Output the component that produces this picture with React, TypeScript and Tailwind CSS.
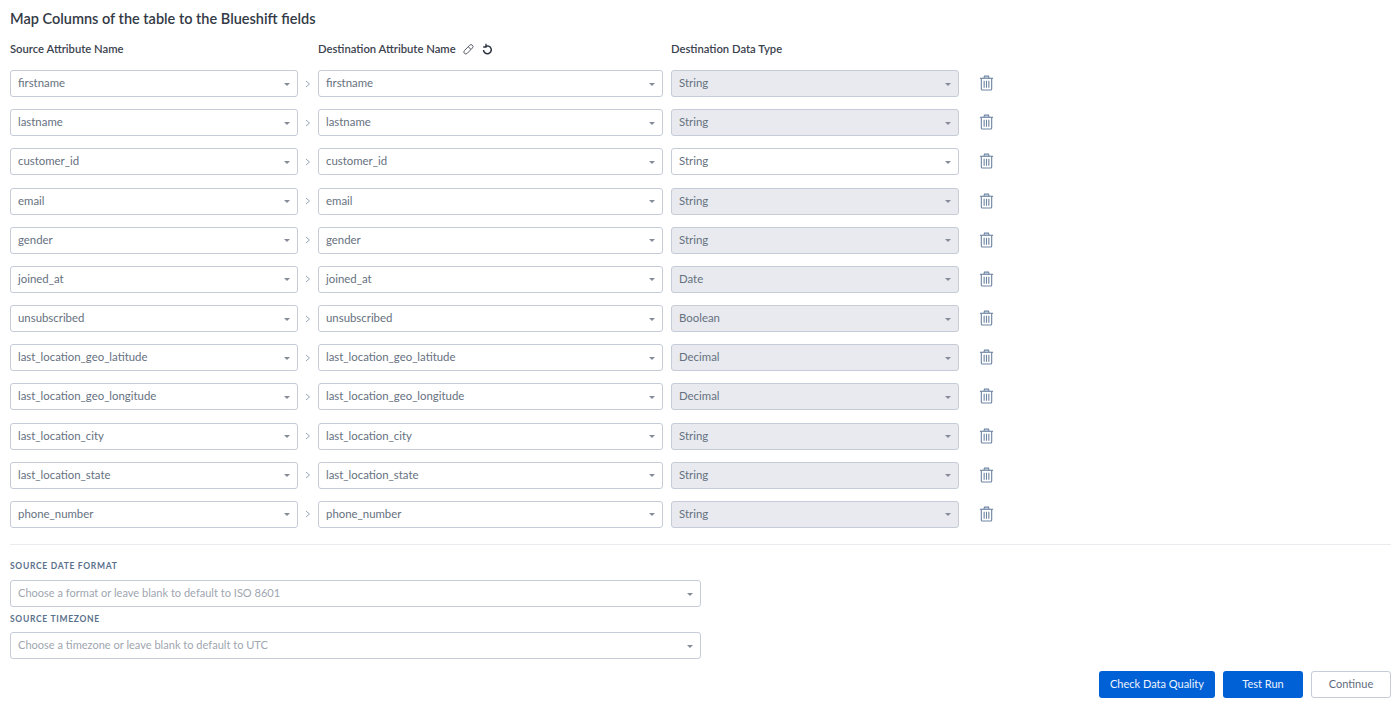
const rows: [string, string, boolean][] = [
  ["firstname", "String", true],
  ["lastname", "String", true],
  ["customer_id", "String", false],
  ["email", "String", true],
  ["gender", "String", true],
  ["joined_at", "Date", true],
  ["unsubscribed", "Boolean", true],
  ["last_location_geo_latitude", "Decimal", true],
  ["last_location_geo_longitude", "Decimal", true],
  ["last_location_city", "String", true],
  ["last_location_state", "String", true],
  ["phone_number", "String", true],
];

function Select({ value, width, disabled, placeholder }: { value: string; width: string; disabled?: boolean; placeholder?: boolean }) {
  return (
    <div
      className={`${width} h-[27px] shrink-0 flex items-center justify-between pl-[7px] pr-[7px] border border-[#c5ccd8] rounded-[3px] ${disabled ? "bg-[#e8eaef]" : "bg-white"}`}
    >
      <span className={`leading-none pb-[1.5px] ${placeholder ? "text-[11.05px] text-[#a0a6b0]" : "text-[11.4px] text-[#667180]"}`}>{value}</span>
      <span className="mt-[1px] w-0 h-0 border-l-[3px] border-r-[3px] border-t-[3px] border-l-transparent border-r-transparent border-t-[#858c97]" />
    </div>
  );
}

function Trash() {
  return (
    <svg width="15" height="16" viewBox="0 0 15 17" fill="none" stroke="#6f86a3" strokeWidth="1.2">
      <path d="M0.5 3.5H14.5" />
      <path d="M4.8 3.2 L5.4 1 H9.6 L10.2 3.2" fill="#b9c5d4" />
      <path d="M2 3.5 V15 a1 1 0 0 0 1 1 H12 a1 1 0 0 0 1 -1 V3.5" />
      <path d="M5 6 V13.5 M7.5 6 V13.5 M10 6 V13.5" />
    </svg>
  );
}

export default function App() {
  return (
    <div className="w-[1399px] h-[706px] overflow-hidden bg-white px-[10px] font-['Lato','Liberation_Sans',sans-serif]">
      <h1 className="pt-[10px] text-[14.5px] leading-[18px] font-semibold text-[#333a45]">Map Columns of the table to the Blueshift fields</h1>
      <div className="mt-[13px] flex h-[16px] items-center text-[11.25px] font-semibold text-[#3a424e]">
        <div className="w-[308px]">Source Attribute Name</div>
        <div className="w-[353px] flex items-center">
          <span>Destination Attribute Name</span>
          <svg className="ml-[7px]" width="11" height="11" viewBox="0 0 11 11" fill="none" stroke="#555d69" strokeWidth="1">
            <path d="M1.4 6.6 L6.6 1.3 a1.9 1.9 0 0 1 2.9 2.6 L4.3 9.3 a1.9 1.9 0 0 1 -2.9 -2.7Z" />
            <path d="M5.2 2.8 L8 5.4" />
          </svg>
          <svg className="ml-[8px]" width="11" height="12" viewBox="0 0 11 12" fill="none" stroke="#2c3440" strokeWidth="1.5">
            <path d="M3.4 3.5 A3.9 3.9 0 1 1 1.5 7" />
            <path d="M4 0.8 V4 H1.2" strokeWidth="1.3" />
          </svg>
        </div>
        <div>Destination Data Type</div>
      </div>
      <div className="mt-[13px]">
        {rows.map(([name, type, disabled]) => (
          <div key={name} className="h-[39.18px] flex items-start">
            <Select value={name} width="w-[288px]" />
            <div className="w-[20px] h-[27px] flex items-center justify-center">
              <svg width="6" height="8" viewBox="0 0 6 8" fill="none" stroke="#97a6b8" strokeWidth="1">
                <path d="M1 1 L4.5 4 L1 7" />
              </svg>
            </div>
            <Select value={name} width="w-[345px]" />
            <div className="w-[8px]" />
            <Select value={type} width="w-[288px]" disabled={disabled} />
            <div className="ml-[20px] h-[26px] flex items-center">
              <Trash />
            </div>
          </div>
        ))}
      </div>
      <div className="mt-[4px] w-[1381px] border-t border-[#e9ebef]" />
      <div className="mt-[16px] h-[10px] flex items-center text-[8.5px] font-bold tracking-[0.7px] text-[#5a718c]">SOURCE DATE FORMAT</div>
      <div className="mt-[9px]">
        <Select value="Choose a format or leave blank to default to ISO 8601" width="w-[691px]" placeholder />
      </div>
      <div className="mt-[7px] h-[10px] flex items-center text-[8.5px] font-bold tracking-[0.7px] text-[#5a718c]">SOURCE TIMEZONE</div>
      <div className="mt-[8px]">
        <Select value="Choose a timezone or leave blank to default to UTC" width="w-[691px]" placeholder />
      </div>
      <div className="mt-[12px] w-[1381px] flex justify-end gap-[8px] text-[11px]">
        <button className="w-[116px] h-[27px] rounded-[3px] bg-[#0060d6] text-[#eef4fc]">Check Data Quality</button>
        <button className="w-[80px] h-[27px] rounded-[3px] bg-[#0060d6] text-[#eef4fc]">Test Run</button>
        <button className="w-[80px] h-[27px] rounded-[3px] bg-white border border-[#c5ccd8] text-[#5f6b7c]">Continue</button>
      </div>
    </div>
  );
}
